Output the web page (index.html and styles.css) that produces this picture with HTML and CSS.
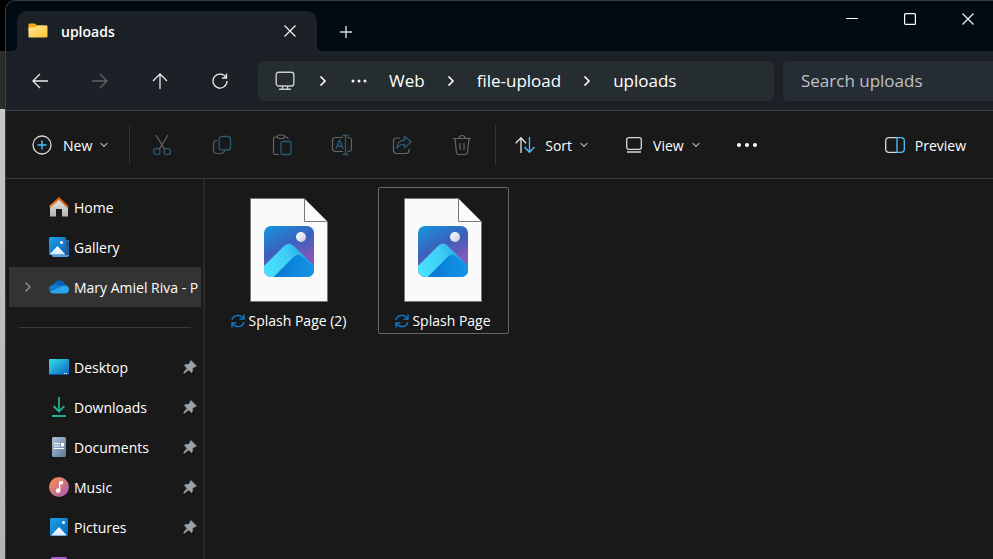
FILE: index.html
```html
<!DOCTYPE html>
<html lang="en">
<head>
<meta charset="utf-8">
<title>uploads</title>
<link rel="stylesheet" href="styles.css">
</head>
<body>
<svg class="sprite" aria-hidden="true">
  <defs>
    <linearGradient id="g-folder" x1="0" y1="0" x2="1" y2="1"><stop offset="0" stop-color="#ffe8a0"/><stop offset="1" stop-color="#fcc42f"/></linearGradient>
    <linearGradient id="g-roof" x1="0" y1="0" x2="1" y2="0"><stop offset="0" stop-color="#f08a1c"/><stop offset="1" stop-color="#cf4a0b"/></linearGradient>
    <linearGradient id="g-wall" x1="0" y1="0" x2="0" y2="1"><stop offset="0" stop-color="#e2e2e2"/><stop offset="1" stop-color="#b4b4b4"/></linearGradient>
    <linearGradient id="g-blue" x1="0" y1="0" x2="1" y2="1"><stop offset="0" stop-color="#1fa2e8"/><stop offset="1" stop-color="#0463b8"/></linearGradient>
    <linearGradient id="g-desk" x1="0" y1="0" x2="1" y2="1"><stop offset="0" stop-color="#35e0e6"/><stop offset="1" stop-color="#0a62bd"/></linearGradient>
    <linearGradient id="g-down" x1="0" y1="0" x2="1" y2="1"><stop offset="0" stop-color="#35cf7c"/><stop offset="1" stop-color="#12a5a0"/></linearGradient>
    <linearGradient id="g-doc" x1="0" y1="0" x2="1" y2="1"><stop offset="0" stop-color="#adc2d8"/><stop offset="1" stop-color="#5c7a9b"/></linearGradient>
    <linearGradient id="g-music" x1="0" y1="0" x2="1" y2="1"><stop offset="0.1" stop-color="#f68b57"/><stop offset="1" stop-color="#a55ab4"/></linearGradient>
    <linearGradient id="g-snow" x1="0" y1="0" x2="0" y2="1"><stop offset="0" stop-color="#fff"/><stop offset="1" stop-color="#d5e9fb"/></linearGradient>
    <linearGradient id="g-sky" x1="0" y1="0" x2="0.5" y2="1"><stop offset="0" stop-color="#1398df"/><stop offset="0.5" stop-color="#3c5fbb"/><stop offset="0.85" stop-color="#8158bb"/></linearGradient>
    <linearGradient id="g-ridge" x1="0" y1="0.6" x2="1" y2="0.4"><stop offset="0" stop-color="#4be3ff"/><stop offset="0.5" stop-color="#3dcdf6"/><stop offset="1" stop-color="#1b94e0"/></linearGradient>
    <linearGradient id="g-slope" x1="0" y1="0" x2="1" y2="0"><stop offset="0" stop-color="#0676d4"/><stop offset="1" stop-color="#1597e3"/></linearGradient>
    <linearGradient id="g-moon" x1="0" y1="0" x2="1" y2="1"><stop offset="0" stop-color="#fff"/><stop offset="1" stop-color="#c8ccd8"/></linearGradient>
    <clipPath id="clip-photo"><rect x="14" y="28" width="50" height="51" rx="7"/></clipPath>
  </defs>
  <symbol id="caret" viewBox="0 0 8 6"><path d="M.7 1.2 4 4.5l3.3-3.3" fill="none" stroke="#b5b5b5" stroke-width="1.2"/></symbol>
  <symbol id="chevron" viewBox="0 0 8 12"><path d="m1.500 1.500 4.500 4.500-4.500 4.500" fill="none" stroke="currentColor" stroke-width="1.600"/></symbol>
  <symbol id="close" viewBox="0 0 12 12"><path d="m.5.5 11 11m0-11-11 11" fill="none" stroke="#f4f4f4" stroke-width="1.2"/></symbol>
  <symbol id="pin" viewBox="0 0 14 14"><path d="M8 .6 13.4 6l-1 .8-1-.2-2.1 2.3.1 2.5-1.1 1.1-2.7-2.7L1 13.4l-.5-.5 3.6-4.6-2.7-2.7 1.1-1.1 2.6.1 2.2-2L7.1 1.500z" fill="#98a2aa" stroke="#98a2aa" stroke-width=".7" stroke-linejoin="round"/></symbol>
  <symbol id="sync" viewBox="0 0 14 14"><g fill="none" stroke="#0c7fdc" stroke-width="1.4"><path d="M1 5.700A6.200 6.200 0 0 1 12.300 4.500M13 8.300A6.200 6.200 0 0 1 1.700 9.500"/><path d="M13 .5v4.600H8.500M1 13.500V8.900h4.500"/></g></symbol>
  <symbol id="picture-file" viewBox="0 0 78 104">
    <path d="M.5.500H54.500L77.500 23.500V103.500H.5z" fill="#fafafa" stroke="#77777a"/>
    <path d="M54.500.500V23.500H77.500z" fill="#fafafa" stroke="#77777a"/>
    <g clip-path="url(#clip-photo)">
      <path d="M14 28h50v51H14z" fill="url(#g-sky)"/>
      <path d="M12 70 34 48q5-5 10 0l22 22v12H12z" fill="url(#g-ridge)"/>
      <path d="M24 79 43 60q5-5 10-1l13 12v10H23z" fill="url(#g-slope)"/>
      <path d="M24 79 43 60q3-3 7-3" fill="none" stroke="#0868b9" stroke-opacity=".5"/>
    </g>
    <circle cx="51" cy="39" r="5" fill="url(#g-moon)"/>
  </symbol>
</svg>

<div class="desktop">
  <div class="behind"></div>
  <div class="window">
    <header class="titlebar">
      <div class="tab">
        <svg width="20" height="16" viewBox="0 0 20 16"><path d="M.5 1.500Q.5.500 1.500.500H7l2 2h9.500V8H.5z" fill="#f4a90f"/><path d="M.5 4.500H7L9 2.500h9.500q1 0 1 1V13.500q0 1-1 1h-17q-1 0-1-1z" fill="url(#g-folder)"/></svg>
        <span class="tab-name">uploads</span>
        <button class="tab-close" aria-label="Close tab"><svg width="12" height="12"><use href="#close"/></svg></button>
      </div>
      <button class="new-tab" aria-label="New tab"><svg width="12" height="12" viewBox="0 0 12 12"><path d="M6 0v12M0 6h12" stroke="#d5d8da" stroke-width="1.400"/></svg></button>
      <div class="caption">
        <button aria-label="Minimize"><svg width="12" height="12" viewBox="0 0 12 12"><path d="M0 5.500h12" stroke="#fff"/></svg></button>
        <button aria-label="Maximize"><svg width="12" height="12" viewBox="0 0 12 12"><rect x=".6" y=".6" width="10.800" height="10.800" rx="1" fill="none" stroke="#fff" stroke-width="1.200"/></svg></button>
        <button aria-label="Close"><svg width="12" height="12"><use href="#close"/></svg></button>
      </div>
    </header>

    <nav class="navbar">
      <div class="history">
        <button aria-label="Back"><svg width="16" height="16" viewBox="0 0 16 16"><path d="M16 8H1M8 1 1 8l7 7" fill="none" stroke="#e8eaeb" stroke-width="1.300"/></svg></button>
        <button aria-label="Forward" disabled><svg width="16" height="16" viewBox="0 0 16 16"><path d="M0 8h15M8 1l7 7-7 7" fill="none" stroke="#5d6367" stroke-width="1.300"/></svg></button>
        <button aria-label="Up"><svg width="16" height="16" viewBox="0 0 16 16"><path d="M8 16V1M1 8l7-7 7 7" fill="none" stroke="#e8eaeb" stroke-width="1.300"/></svg></button>
        <button aria-label="Refresh"><svg width="16" height="16" viewBox="0 0 16 16"><path d="M14.300 5A7 7 0 1 0 15 8M14.500.500V5H10" fill="none" stroke="#e8eaeb" stroke-width="1.300"/></svg></button>
      </div>
      <div class="address">
        <svg class="pc" width="20" height="20" viewBox="0 0 20 20"><g fill="none" stroke="#c9cdce" stroke-width="1.400"><rect x="1.200" y="1.200" width="17.600" height="13.800" rx="2.500"/><path d="M4 18.300h12M7.500 15v3M12.500 15v3"/></g></svg>
        <svg class="step" width="8" height="12"><use href="#chevron"/></svg>
        <button class="overflow" aria-label="More folders"><svg width="16" height="4" viewBox="0 0 16 4"><g fill="#f2f2f2"><circle cx="2" cy="2" r="1.500"/><circle cx="8" cy="2" r="1.500"/><circle cx="14" cy="2" r="1.500"/></g></svg></button>
        <a href="#web">Web</a>
        <svg class="step" width="8" height="12"><use href="#chevron"/></svg>
        <a href="#file-upload">file-upload</a>
        <svg class="step" width="8" height="12"><use href="#chevron"/></svg>
        <a href="#uploads">uploads</a>
      </div>
      <input class="search" type="search" placeholder="Search uploads" aria-label="Search uploads">
    </nav>

    <div class="toolbar">
      <button class="tool new"><svg width="20" height="20" viewBox="0 0 20 20"><circle cx="10" cy="10" r="9" fill="none" stroke="#d8d8d8" stroke-width="1.300"/><path d="M10 5.500v9M5.500 10h9" stroke="#4cc2ff" stroke-width="1.400"/></svg><span>New</span><svg class="caret" width="8" height="6"><use href="#caret"/></svg></button>
      <div class="actions">
        <button disabled aria-label="Cut"><svg width="20" height="22" viewBox="0 0 20 22"><path d="M4 1l8.500 14M16 1 7.500 15" fill="none" stroke="#666" stroke-width="1.200"/><g fill="none" stroke="#2c5a73" stroke-width="1.300"><circle cx="4.800" cy="17.500" r="3.200"/><circle cx="15.200" cy="17.500" r="3.200"/></g></svg></button>
        <button disabled aria-label="Copy"><svg width="20" height="20" viewBox="0 0 20 20"><path d="M5 5.500Q1.500 5.500 1.500 9v6q0 3.500 3.500 3.500h4q3 0 3.500-2.500" fill="none" stroke="#5c5c5c" stroke-width="1.200"/><rect x="7" y="1.500" width="11.500" height="13.500" rx="3" fill="none" stroke="#2c5a73" stroke-width="1.300"/></svg></button>
        <button disabled aria-label="Paste"><svg width="20" height="22" viewBox="0 0 20 22"><path d="M5.500 3H3Q1.500 3 1.500 4.500v14.500q0 1.500 1.500 1.500h4M12 3h2.500Q16 3 16 4.500V5" fill="none" stroke="#666" stroke-width="1.200"/><rect x="5.500" y="1" width="7" height="3.500" rx="1.700" fill="none" stroke="#666" stroke-width="1.200"/><rect x="9" y="7.500" width="10" height="13" rx="1.500" fill="none" stroke="#2c5a73" stroke-width="1.300"/></svg></button>
        <button disabled aria-label="Rename"><svg width="22" height="22" viewBox="0 0 22 22"><path d="M12 3.500H4.500Q1.500 3.500 1.500 6.500v8q0 3 3 3H12M16.500 3.500q4 0 4 3v8q0 3-4 3" fill="none" stroke="#666" stroke-width="1.200"/><path d="M11.500 1.500h6M11.500 20.500h6M14.500 1.500v19M5 15l3.200-8.500h.6L12 15M6 12h5" fill="none" stroke="#2c5a73" stroke-width="1.300"/></svg></button>
        <button disabled aria-label="Share"><svg width="20" height="20" viewBox="0 0 20 20"><path d="M8 3H4.500Q1.500 3 1.500 6v9.500q0 3 3 3h9.500q3 0 3-3V14" fill="none" stroke="#666" stroke-width="1.200"/><path d="M12.500 1.500v3.500Q5.500 5.500 4.800 13q3-3.700 7.700-3.700v3.500L19 7z" fill="none" stroke="#2c5a73" stroke-width="1.300" stroke-linejoin="round"/></svg></button>
        <button disabled aria-label="Delete"><svg width="20" height="22" viewBox="0 0 20 22"><path d="M1 4.500h18M7 4.500q0-3 3-3t3 3M3 4.500l1.500 14q.2 2 2.300 2h6.400q2.100 0 2.300-2l1.500-14M8 9v7M12 9v7" fill="none" stroke="#666" stroke-width="1.200"/></svg></button>
      </div>
      <button class="tool sort"><svg width="20" height="18" viewBox="0 0 20 18"><path d="M6 17V2M.7 7.300 6 1.700l5 5.600" fill="none" stroke="#e2e2e2" stroke-width="1.300"/><path d="M14.500 1v15M9.500 11l5 5.300 5-5.300" fill="none" stroke="#4cc2ff" stroke-width="1.300"/></svg><span>Sort</span><svg class="caret" width="8" height="6"><use href="#caret"/></svg></button>
      <button class="tool"><svg width="16" height="16" viewBox="0 0 16 16"><rect x=".7" y=".7" width="14.600" height="11.600" rx="2" fill="none" stroke="#d8d8d8" stroke-width="1.300"/><path d="M1 15h14" stroke="#d8d8d8" stroke-width="1.400"/></svg><span>View</span><svg class="caret" width="8" height="6"><use href="#caret"/></svg></button>
      <button class="tool more" aria-label="See more"><svg width="22" height="4" viewBox="0 0 22 4"><g fill="#fff"><circle cx="3" cy="2" r="2"/><circle cx="11" cy="2" r="2"/><circle cx="19" cy="2" r="2"/></g></svg></button>
      <button class="tool preview"><svg width="20" height="16" viewBox="0 0 20 16"><path d="M12 .7H4Q.7.700.7 4v8q0 3.300 3.300 3.300h8" fill="none" stroke="#d8d8d8" stroke-width="1.300"/><path d="M12 .7h4q3.300 0 3.300 3.300v8q0 3.300-3.300 3.300h-4z" fill="none" stroke="#4cc2ff" stroke-width="1.300"/></svg><span>Preview</span></button>
    </div>

    <div class="content">
      <aside class="sidebar">
        <a class="place" href="#home"><svg width="20" height="20" viewBox="0 0 20 20"><path d="M1 9 10 2l9 7v10.500h-6V12H7v7.500H1z" fill="url(#g-wall)"/><path d="M.8 10 10 1.500 19.200 10" fill="none" stroke="url(#g-roof)" stroke-width="2.200"/></svg><span>Home</span></a>
        <a class="place" href="#gallery"><svg width="20" height="20" viewBox="0 0 20 20"><path d="M3 18h14.500V3H20v15q0 2-2 2H4q-1 0-1-2z" fill="#5b9bdc"/><path d="M18 3q2 0 2 2v13h-2z" fill="#0c5db5"/><rect width="17" height="18" rx="1.500" fill="url(#g-blue)"/><path d="m1 17 7.500-8 7.500 8v.5H1z" fill="url(#g-snow)"/><circle cx="12.500" cy="5.500" r="1.500" fill="#fff"/></svg><span>Gallery</span></a>
        <a class="place selected" href="#onedrive"><svg class="expander" width="8" height="12"><use href="#chevron"/></svg><svg width="20" height="20" viewBox="0 0 20 20"><path d="M4 9Q6 3 11 3.500q4.500.5 5.500 5L10 14z" fill="#0562b6"/><path d="M4.500 7.500q3-1 6 1L14 11l-9 5.500Q0 16 0 12q0-4 4.500-4.500z" fill="#1278d0"/><path d="M16 8.500q4 .3 4 4t-4 4H5q-2.500 0-4-1.700L12.500 9.500q1.500-1 3.500-1z" fill="#29a6ec"/></svg><span>Mary Amiel Riva - P</span></a>
        <hr>
        <a class="place" href="#desktop"><svg width="20" height="20" viewBox="0 0 20 20"><rect y="2" width="20" height="16" rx="1" fill="url(#g-desk)"/><path d="M0 17h20v1H0z" fill="#0b579e"/><path d="M15 16.500h1M17 16.500h1" stroke="#fff"/></svg><span>Desktop</span><svg class="pin" width="14" height="14"><use href="#pin"/></svg></a>
        <a class="place" href="#downloads"><svg width="20" height="20" viewBox="0 0 20 20"><path d="M9.200 0h1.600v12.500l4-4L16 9.700l-6 6-6-6 1.200-1.200 4 4zM3 18h14v2H3z" fill="url(#g-down)"/></svg><span>Downloads</span><svg class="pin" width="14" height="14"><use href="#pin"/></svg></a>
        <a class="place" href="#documents"><svg width="20" height="20" viewBox="0 0 20 20"><rect x="3" width="14" height="20" rx="1.500" fill="url(#g-doc)"/><path d="M5 6.500h6M5 9h6M5 11.500h10" stroke="#fff"/><path d="M12 6h3v3.500h-3z" fill="#fff"/></svg><span>Documents</span><svg class="pin" width="14" height="14"><use href="#pin"/></svg></a>
        <a class="place" href="#music"><svg width="20" height="20" viewBox="0 0 20 20"><circle cx="10" cy="10" r="10" fill="url(#g-music)"/><path d="M10 4.500 14 4v3l-2.700.6V13a2.200 2.200 0 1 1-1.300-1.500z" fill="#fff"/></svg><span>Music</span><svg class="pin" width="14" height="14"><use href="#pin"/></svg></a>
        <a class="place" href="#pictures"><svg width="20" height="20" viewBox="0 0 20 20"><rect x="1" y="1" width="18" height="18" rx="1.500" fill="url(#g-blue)"/><path d="m2.500 18 7.500-8 7.500 8v.5h-15z" fill="url(#g-snow)"/><circle cx="14.500" cy="5.500" r="1.500" fill="#fff"/></svg><span>Pictures</span><svg class="pin" width="14" height="14"><use href="#pin"/></svg></a>
        <a class="place" href="#videos" aria-label="Videos"><svg width="20" height="20" viewBox="0 0 20 20"><rect x="2" width="16" height="20" rx="1.500" fill="#a45be0"/></svg></a>
      </aside>
      <main class="files">
        <button class="file"><svg width="78" height="104"><use href="#picture-file"/></svg><span class="file-name"><svg width="14" height="14"><use href="#sync"/></svg>Splash Page (2)</span></button>
        <button class="file focused"><svg width="78" height="104"><use href="#picture-file"/></svg><span class="file-name"><svg width="14" height="14"><use href="#sync"/></svg>Splash Page</span></button>
      </main>
    </div>
  </div>
</div>
</body>
</html>
```
FILE: styles.css
```css
* { box-sizing: border-box; }

body {
  margin: 0;
  background: #000;
  color: #fff;
  font-family: "Segoe UI", "Open Sans", "Noto Sans", sans-serif;
  font-size: 14px;
  line-height: 20px;
}

button {
  display: flex;
  align-items: center;
  justify-content: center;
  padding: 0;
  border: 0;
  background: none;
  color: inherit;
  font: inherit;
}

a { color: inherit; text-decoration: none; }
svg { flex: none; display: block; }
.sprite { position: absolute; width: 0; height: 0; }

.desktop {
  display: flex;
  height: 100vh;
  overflow: hidden;
}

.behind {
  flex: none;
  width: 5px;
  background: linear-gradient(#000 51px, #2b2b2b 51px, #2b2b2b 109px, #c6c6c6 109px, #b4b4b4);
}

.window {
  flex: 1;
  min-width: 0;
  display: flex;
  flex-direction: column;
  border: solid #3a3d3f;
  border-width: 1px 0 0 1px;
  border-top-left-radius: 10px;
  overflow: hidden;
  background: #191919;
}

/* Title bar */
.titlebar {
  display: flex;
  height: 50px;
  padding-left: 11px;
  background: #000b13;
}

.tab {
  position: relative;
  display: flex;
  align-items: center;
  width: 300px;
  margin-top: 10px;
  padding: 0 21px 0 11px;
  border-radius: 10px 10px 0 0;
  background: #1b2127;
}

.tab::before,
.tab::after {
  content: "";
  position: absolute;
  bottom: 0;
  width: 5px;
  height: 5px;
}

.tab::before { right: 100%; background: radial-gradient(circle at 0 0, transparent 5px, #1b2127 5px); }
.tab::after { left: 100%; background: radial-gradient(circle at 100% 0, transparent 5px, #1b2127 5px); }

.tab-name { margin-left: 13px; font-weight: 600; }
.tab-close { width: 12px; height: 20px; margin-left: auto; }
.new-tab { width: 58px; margin-top: 12px; }

.caption {
  display: flex;
  height: 36px;
  margin: 0 -4px 0 auto;
}

.caption button { width: 58px; }

/* Navigation */
.navbar {
  display: flex;
  align-items: center;
  height: 60px;
  padding-left: 4px;
  border-bottom: 1px solid #3d3f40;
  background: #1b2127;
}

.history { display: flex; margin-right: 8px; }
.history button { width: 60px; height: 40px; }

.address {
  flex: 1;
  display: flex;
  align-items: center;
  height: 40px;
  margin-right: 9px;
  padding-left: 17px;
  border-radius: 5px;
  background: #262d31;
  font-size: 17px;
}

.address .step { margin: 0 22px; }
.address .pc { margin-right: 2px; }
.overflow { width: 20px; margin-right: 20px; }

.search {
  width: 210px;
  height: 40px;
  padding: 0 18px;
  border: 0;
  border-radius: 5px 0 0 5px;
  background: #262c33;
  color: #fff;
  font: inherit;
  font-size: 17px;
}

.search::placeholder { color: #bfc2c5; opacity: 1; }

/* Commands */
.toolbar {
  display: flex;
  align-items: center;
  height: 68px;
  border-bottom: 1px solid #3a3a3a;
}

.tool { height: 40px; }
.tool span { margin-left: 11px; }
.tool span, .place span, .tab-name { padding-top: 2px; }
.caret { margin-left: 8px; }
.new { padding: 0 21px 0 26px; }

.actions {
  display: flex;
  height: 40px;
  padding: 0 3px 0 2px;
  border: solid #333;
  border-width: 0 1px;
}

.actions button { width: 60px; }
.sort { margin: 0 38px 0 19px; }
.sort span { margin-left: 10px; }
.more { margin-left: 36px; }
.preview { margin: 0 27px 0 auto; }
.preview span { margin-left: 10px; }

/* Content */
.content {
  flex: 1;
  display: flex;
  min-height: 0;
}

.sidebar {
  flex: none;
  width: 199px;
  padding: 8px 2px 0 3px;
  border-right: 2px solid #292929;
  overflow: hidden;
}

.place {
  position: relative;
  display: flex;
  align-items: center;
  height: 40px;
  padding-left: 40px;
  overflow: hidden;
  white-space: nowrap;
}

.place span { margin-left: 5px; }
.selected { background: #333; }

.expander {
  position: absolute;
  left: 15px;
  color: #858585;
}

.pin { margin: 0 4px 0 auto; }

.sidebar hr {
  height: 1px;
  margin: 20px 10px 19px;
  border: 0;
  background: #3b3b3b;
}

.files {
  flex: 1;
  display: flex;
  align-items: flex-start;
  gap: 23px;
  padding: 8px 19px;
}

.file {
  flex-direction: column;
  width: 131px;
  padding: 10px 1px 2px 0;
  border: 1px solid transparent;
}

.focused { border-color: #656565; border-radius: 2px; }

.file-name {
  display: flex;
  align-items: center;
  gap: 3px;
  margin-top: 9px;
  white-space: nowrap;
}
```
